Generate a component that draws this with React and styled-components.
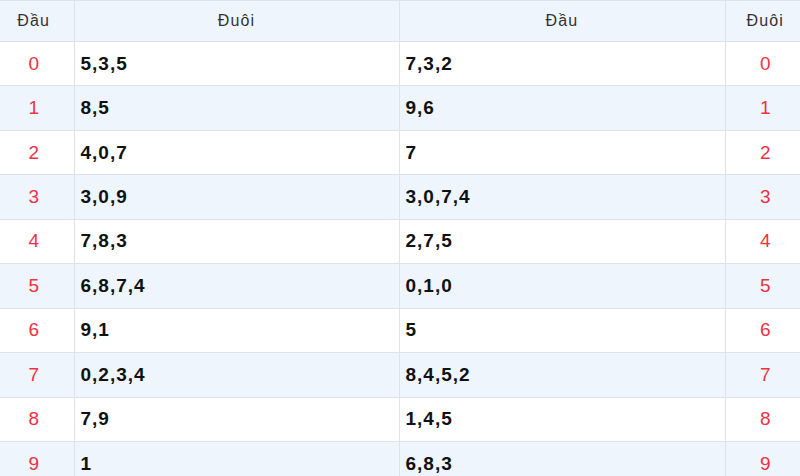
import styled, { createGlobalStyle } from 'styled-components'

const GlobalStyle = createGlobalStyle`
    html, body {
        margin: 0;
        padding: 0;
        background: #fff;
        overflow: hidden;
        font-family: "Liberation Sans", Arial, sans-serif;
    }
`

const Table = styled.table`
    width: 811px;
    margin-left: -6px;
    border-collapse: collapse;
    table-layout: fixed;
`

const HeadCell = styled.th`
    height: 40px;
    padding: 0;
    font-size: 16px;
    font-weight: normal;
    letter-spacing: 1.2px;
    color: #333;
    background: #eef5fd;
    text-align: center;
    border-top: 1px solid #dfe3e8;
    border-bottom: 1px solid #dfe3e8;
    border-right: 1px solid #dfe3e8;
    &:last-child {
        border-right: none;
    }
`

const Row = styled.tr`
    height: 44.44px;
    background: ${props => (props.$striped ? '#eef5fd' : '#fff')};
`

const KeyCell = styled.td`
    padding: 0;
    text-align: center;
    font-size: 19px;
    color: #f2303f;
    border-bottom: 1px solid #dfe3e8;
    border-right: 1px solid #dfe3e8;
    &:last-child {
        border-right: none;
    }
`

const ValueCell = styled.td`
    padding: 0 6px;
    text-align: left;
    font-size: 19px;
    font-weight: bold;
    letter-spacing: 1px;
    color: #111;
    border-bottom: 1px solid #dfe3e8;
    border-right: 1px solid #dfe3e8;
`

const rows = [
    ['5,3,5', '7,3,2'],
    ['8,5', '9,6'],
    ['4,0,7', '7'],
    ['3,0,9', '3,0,7,4'],
    ['7,8,3', '2,7,5'],
    ['6,8,7,4', '0,1,0'],
    ['9,1', '5'],
    ['0,2,3,4', '8,4,5,2'],
    ['7,9', '1,4,5'],
    ['1', '6,8,3'],
]

const App = () => {
    return (
        <>
            <GlobalStyle />
            <Table>
                <colgroup>
                    <col style={{ width: '80px' }} />
                    <col style={{ width: '325px' }} />
                    <col style={{ width: '326px' }} />
                    <col style={{ width: '80px' }} />
                </colgroup>
                <thead>
                    <tr>
                        <HeadCell>Đầu</HeadCell>
                        <HeadCell>Đuôi</HeadCell>
                        <HeadCell>Đầu</HeadCell>
                        <HeadCell>Đuôi</HeadCell>
                    </tr>
                </thead>
                <tbody>
                    {rows.map(([tail, head], i) => (
                        <Row key={i} $striped={i % 2 === 1}>
                            <KeyCell>{i}</KeyCell>
                            <ValueCell>{tail}</ValueCell>
                            <ValueCell>{head}</ValueCell>
                            <KeyCell>{i}</KeyCell>
                        </Row>
                    ))}
                </tbody>
            </Table>
        </>
    )
}

export default App
